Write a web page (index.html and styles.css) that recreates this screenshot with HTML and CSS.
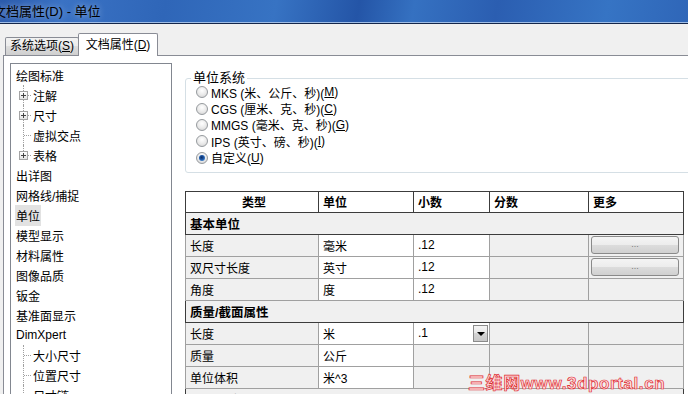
FILE: index.html
```html
<!DOCTYPE html>
<html lang="zh-CN">
<head>
  <meta charset="UTF-8">
  <title>文档属性 - 单位</title>
  <link rel="stylesheet" href="styles.css">
</head>
<body>

  <!-- Window title -->
  <div class="titlebar"><span class="title">文档属性(D) - 单位</span></div>

  <!-- Tabs -->
  <div class="tabstrip">
    <div class="tab">系统选项(<u>S</u>)</div>
    <div class="tab selected">文档属性(<u>D</u>)</div>
  </div>

  <div class="page">

    <!-- Left tree -->
    <div class="tree">
      <div class="node">绘图标准</div>
      <div class="node child"><span class="twig"><span class="plus"></span></span>注解</div>
      <div class="node child"><span class="twig"><span class="plus"></span></span>尺寸</div>
      <div class="node child"><span class="twig"></span>虚拟交点</div>
      <div class="node child"><span class="twig last"><span class="plus"></span></span>表格</div>
      <div class="node">出详图</div>
      <div class="node">网格线/捕捉</div>
      <div class="node"><span class="current">单位</span></div>
      <div class="node">模型显示</div>
      <div class="node">材料属性</div>
      <div class="node">图像品质</div>
      <div class="node">钣金</div>
      <div class="node">基准面显示</div>
      <div class="node">DimXpert</div>
      <div class="node child"><span class="twig"></span>大小尺寸</div>
      <div class="node child"><span class="twig"></span>位置尺寸</div>
      <div class="node child"><span class="twig"></span>尺寸链</div>
    </div>

    <!-- Right settings -->
    <div class="settings">
      <fieldset class="group">
        <legend>单位系统</legend>
        <div class="radios">
          <div class="option"><span class="radio"></span>MKS (米、公斤、秒)(<u>M</u>)</div>
          <div class="option"><span class="radio"></span>CGS (厘米、克、秒)(<u>C</u>)</div>
          <div class="option"><span class="radio"></span>MMGS (毫米、克、秒)(<u>G</u>)</div>
          <div class="option"><span class="radio"></span>IPS (英寸、磅、秒)(<u>I</u>)</div>
          <div class="option"><span class="radio on"></span>自定义(<u>U</u>)</div>
        </div>
      </fieldset>

      <table class="units">
        <colgroup>
          <col style="width:133px"><col style="width:95px"><col style="width:76px"><col style="width:99px"><col style="width:95px">
        </colgroup>
        <tr class="head">
          <th class="center">类型</th><th>单位</th><th>小数</th><th>分数</th><th>更多</th>
        </tr>
        <tr class="section"><td colspan="5">基本单位</td></tr>
        <tr>
          <td class="kind">长度</td><td>毫米</td><td>.12</td><td class="off"></td>
          <td class="off"><div class="more-btn">...</div></td>
        </tr>
        <tr>
          <td class="kind">双尺寸长度</td><td>英寸</td><td>.12</td><td class="off"></td>
          <td class="off"><div class="more-btn">...</div></td>
        </tr>
        <tr>
          <td class="kind">角度</td><td>度</td><td>.12</td><td class="off"></td><td class="off"></td>
        </tr>
        <tr class="section"><td colspan="5">质量/截面属性</td></tr>
        <tr>
          <td class="kind">长度</td><td>米</td>
          <td><div class="combo"><span>.1</span><span class="drop"></span></div></td>
          <td class="off"></td><td class="off"></td>
        </tr>
        <tr>
          <td class="kind">质量</td><td>公斤</td><td class="off"></td><td class="off"></td><td class="off"></td>
        </tr>
        <tr>
          <td class="kind">单位体积</td><td>米^3</td><td class="off"></td><td class="off"></td><td class="off"></td>
        </tr>
        <tr class="section"><td colspan="5">运动单位</td></tr>
      </table>
    </div>
  </div>

  <!-- Site watermark -->
  <div class="watermark">三维网www.3dportal.cn</div>

</body>
</html>
```

FILE: styles.css
```css
/* RESET & BASE */
* {
  margin: 0;
  padding: 0;
  box-sizing: border-box;
}
body {
  position: relative;
  width: 688px;
  height: 394px;
  overflow: hidden;
  background: #f0f0f0;
  font-family: 'Liberation Sans', 'Noto Sans CJK SC', sans-serif;
  font-size: 12px;
  color: #000;
}
u {
  text-decoration: underline;
  text-underline-offset: 1px;
}

/* TITLE BAR */
.titlebar {
  height: 24px;
  background: linear-gradient(100deg,
    #2a5aac 0%, #3a72c4 9%, #2f66b8 24%, #3773c3 40%,
    #2455a7 52%, #3571c1 60%, #2b5eb1 72%, #3674c4 88%, #2f66b8 100%);
  border-bottom: 1px solid #14264a;
  box-shadow: inset 0 -1px 0 #9fbde6;
  display: flex;
  align-items: center;
  padding-bottom: 2px;
}
.title {
  margin-left: -7px;
  font-size: 13px;
  color: #000;
  text-shadow: 0 0 6px rgba(255,255,255,0.55);
}

/* TABS */
.tabstrip {
  height: 31px;
  display: flex;
  align-items: flex-end;
  padding-left: 5px;
}
.tab {
  width: 74px;
  height: 18px;
  border: 1px solid #898c95;
  border-bottom: none;
  border-radius: 2px 2px 0 0;
  background: linear-gradient(#f2f2f2, #ebebeb 50%, #dddddd 50%, #cfcfcf);
  text-align: center;
  line-height: 17px;
  font-size: 12px;
}
.tab.selected {
  width: 80px;
  height: 23px;
  margin-left: -1px;
  margin-bottom: -1px;
  background: #fff;
  line-height: 22px;
  position: relative;
  z-index: 1;
}

/* PAGE */
.page {
  height: 339px;
  margin-left: 3px;
  border-left: 1px solid #898c95;
  border-top: 1px solid #898c95;
  background: #fff;
  display: flex;
  padding: 7px 0 0 6px;
}

/* TREE */
.tree {
  width: 162px;
  flex: none;
  border: 1px solid #828790;
  border-bottom: none;
  padding: 1px 0 0 5px;
  overflow: hidden;
}
.node {
  height: 20px;
  display: flex;
  align-items: center;
  white-space: nowrap;
}
.twig {
  position: relative;
  width: 17px;
  height: 20px;
  flex: none;
}
.twig::before {
  content: '';
  position: absolute;
  left: 7px;
  top: 0;
  bottom: 0;
  border-left: 1px dotted #a0a0a0;
}
.twig.last::before {
  bottom: 10px;
}
.twig::after {
  content: '';
  position: absolute;
  left: 8px;
  right: 2px;
  top: 10px;
  border-top: 1px dotted #a0a0a0;
}
.plus {
  position: absolute;
  left: 3px;
  top: 6px;
  width: 9px;
  height: 9px;
  border: 1px solid #a4a4a4;
  background:
    linear-gradient(#444, #444) center / 5px 1px no-repeat,
    linear-gradient(#444, #444) center / 1px 5px no-repeat,
    linear-gradient(#fff, #e4e4e4);
  z-index: 1;
}
.current {
  background: #e2e2e2;
  padding: 2px 1px;
  margin-left: -1px;
}

/* SETTINGS */
.settings {
  flex: 1;
  padding-left: 13px;
  overflow: hidden;
}
.group {
  margin: 7px -12px 0 0;
  padding: 0 0 6px 9px;
  border: 1px solid #d5dfe5;
  border-radius: 3px;
  min-width: 0;
}
.group legend {
  margin-left: -4px;
  padding: 0 2px;
  font-size: 13px;
  line-height: 16px;
}
.radios {
  margin-top: -2px;
}
.option {
  height: 16.4px;
  display: flex;
  align-items: center;
  font-size: 12px;
  white-space: nowrap;
}
.radio {
  width: 12px;
  height: 12px;
  margin: 0 3px 0 1px;
  border-radius: 50%;
  border: 1px solid #969a9e;
  background: radial-gradient(circle at 50% 35%, #ffffff 0%, #e9e9e9 55%, #cdcdcd 100%);
  display: flex;
  align-items: center;
  justify-content: center;
  flex: none;
}
.radio.on::after {
  content: '';
  width: 6px;
  height: 6px;
  border-radius: 50%;
  background: radial-gradient(circle at 45% 40%, #0b2c63 0%, #1f59a8 45%, #63a8e6 100%);
}

/* UNITS TABLE */
.units {
  margin-top: 18px;
  width: 498px;
  table-layout: fixed;
  border-collapse: collapse;
}
.units td,
.units th {
  border: 1px solid #a0a0a0;
  padding: 0 0 0 4px;
  text-align: left;
  font-size: 12px;
  white-space: nowrap;
  overflow: hidden;
}
.units tr {
  height: 22px;
}
.units .head {
  height: 21px;
}
.units th {
  font-weight: bold;
  background: #fff;
  border-color: #3c3c3c;
}
.units th.center {
  text-align: center;
}
.units .section td {
  font-weight: bold;
  background: #f0f0f0;
  border-color: #3c3c3c;
  font-size: 12.5px;
}
.units td.kind,
.units td.off {
  background: #f0f0f0;
}
.units td.off {
  padding: 0;
}
.more-btn {
  height: 18px;
  margin: 0 4px 0 2px;
  border: 1px solid #8a8a8a;
  border-radius: 3px;
  background: linear-gradient(#f4f4f4, #ececec 50%, #dcdcdc 50%, #d0d0d0);
  color: #7a7a7a;
  font-size: 9px;
  line-height: 14px;
  text-align: center;
}
.combo {
  display: flex;
  justify-content: space-between;
  align-items: center;
  padding-right: 1px;
}
.drop {
  width: 15px;
  height: 17px;
  border: 1px solid #8a8a8a;
  background: linear-gradient(#f4f4f4, #e6e6e6 50%, #d4d4d4 50%, #c8c8c8);
  display: flex;
  align-items: center;
  justify-content: center;
}
.drop::after {
  content: '';
  border-left: 4px solid transparent;
  border-right: 4px solid transparent;
  border-top: 4px solid #000;
  margin-top: 1px;
}

/* WATERMARK */
.watermark {
  position: absolute;
  left: 468px;
  top: 369px;
  font-family: 'Liberation Sans', 'Noto Sans CJK SC', sans-serif;
  font-weight: bold;
  font-size: 17px;
  letter-spacing: 0.6px;
  color: #ffdede;
  -webkit-text-stroke: 0.7px #de2a30;
  white-space: nowrap;
}
```
